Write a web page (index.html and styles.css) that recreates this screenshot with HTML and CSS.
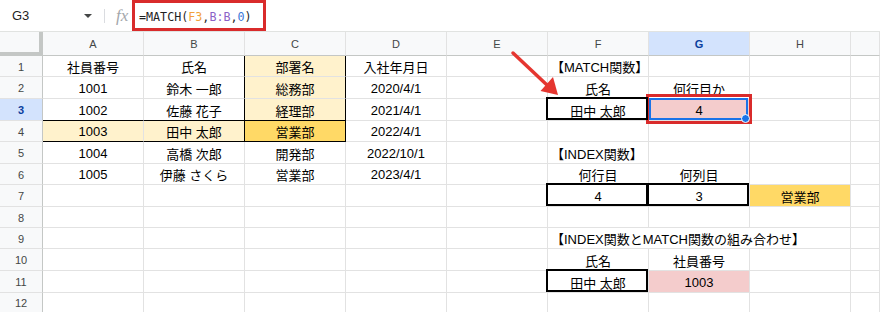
FILE: index.html
```html
<!DOCTYPE html>
<html lang="ja">

<head>
    <meta charset="utf-8">
    <meta name="viewport" content="width=device-width, initial-scale=1.0">
    <title>MATCH関数</title>
    <link rel="stylesheet" href="styles.css">
</head>

<body>
    <div class="page">
        <div class="toolbar">
            <div class="namebox"><span>G3</span><span class="caret"></span></div>
            <div class="sep"></div>
            <span class="fx">fx</span>
            <div class="formula">=MATCH(<span class="r1">F3</span>,<span class="r2">B:B</span>,<span class="r3">0</span>)</div>
        </div>

        <div class="sheet">
            <!-- header -->
            <div class="c corner"></div>
            <div class="c hd">A</div>
            <div class="c hd">B</div>
            <div class="c hd">C</div>
            <div class="c hd">D</div>
            <div class="c hd">E</div>
            <div class="c hd">F</div>
            <div class="c hd on">G</div>
            <div class="c hd">H</div>
            <div class="c hd"></div>

            <!-- 1 -->
            <div class="c rh">1</div>
            <div class="c">社員番号</div>
            <div class="c br">氏名</div>
            <div class="c y br">部署名</div>
            <div class="c">入社年月日</div>
            <div class="c"></div>
            <div class="c l">【MATCH関数】</div>
            <div class="c"></div>
            <div class="c"></div>
            <div class="c"></div>

            <!-- 2 -->
            <div class="c rh">2</div>
            <div class="c">1001</div>
            <div class="c br">鈴木 一郎</div>
            <div class="c y br">総務部</div>
            <div class="c">2020/4/1</div>
            <div class="c"></div>
            <div class="c">氏名</div>
            <div class="c">何行目か</div>
            <div class="c"></div>
            <div class="c"></div>

            <!-- 3 -->
            <div class="c rh on">3</div>
            <div class="c bb">1002</div>
            <div class="c br bb">佐藤 花子</div>
            <div class="c y br bb">経理部</div>
            <div class="c">2021/4/1</div>
            <div class="c"></div>
            <div class="c bx">田中 太郎</div>
            <div class="c pk sel">4</div>
            <div class="c"></div>
            <div class="c"></div>

            <!-- 4 -->
            <div class="c rh">4</div>
            <div class="c y bb">1003</div>
            <div class="c y br bb">田中 太郎</div>
            <div class="c yy br bb">営業部</div>
            <div class="c">2022/4/1</div>
            <div class="c"></div>
            <div class="c"></div>
            <div class="c"></div>
            <div class="c"></div>
            <div class="c"></div>

            <!-- 5 -->
            <div class="c rh">5</div>
            <div class="c">1004</div>
            <div class="c">高橋 次郎</div>
            <div class="c">開発部</div>
            <div class="c">2022/10/1</div>
            <div class="c"></div>
            <div class="c l">【INDEX関数】</div>
            <div class="c"></div>
            <div class="c"></div>
            <div class="c"></div>

            <!-- 6 -->
            <div class="c rh">6</div>
            <div class="c">1005</div>
            <div class="c">伊藤 さくら</div>
            <div class="c">営業部</div>
            <div class="c">2023/4/1</div>
            <div class="c"></div>
            <div class="c">何行目</div>
            <div class="c">何列目</div>
            <div class="c"></div>
            <div class="c"></div>

            <!-- 7 -->
            <div class="c rh">7</div>
            <div class="c"></div>
            <div class="c"></div>
            <div class="c"></div>
            <div class="c"></div>
            <div class="c"></div>
            <div class="c bx">4</div>
            <div class="c bx">3</div>
            <div class="c yy">営業部</div>
            <div class="c"></div>

            <!-- 8 -->
            <div class="c rh">8</div>
            <div class="c"></div>
            <div class="c"></div>
            <div class="c"></div>
            <div class="c"></div>
            <div class="c"></div>
            <div class="c"></div>
            <div class="c"></div>
            <div class="c"></div>
            <div class="c"></div>

            <!-- 9 -->
            <div class="c rh">9</div>
            <div class="c"></div>
            <div class="c"></div>
            <div class="c"></div>
            <div class="c"></div>
            <div class="c"></div>
            <div class="c l span3">【INDEX関数とMATCH関数の組み合わせ】</div>
            <div class="c"></div>

            <!-- 10 -->
            <div class="c rh">10</div>
            <div class="c"></div>
            <div class="c"></div>
            <div class="c"></div>
            <div class="c"></div>
            <div class="c"></div>
            <div class="c">氏名</div>
            <div class="c">社員番号</div>
            <div class="c"></div>
            <div class="c"></div>

            <!-- 11 -->
            <div class="c rh">11</div>
            <div class="c"></div>
            <div class="c"></div>
            <div class="c"></div>
            <div class="c"></div>
            <div class="c"></div>
            <div class="c bx">田中 太郎</div>
            <div class="c pk">1003</div>
            <div class="c"></div>
            <div class="c"></div>

            <!-- 12 -->
            <div class="c rh">12</div>
            <div class="c"></div>
            <div class="c"></div>
            <div class="c"></div>
            <div class="c"></div>
            <div class="c"></div>
            <div class="c"></div>
            <div class="c"></div>
            <div class="c"></div>
            <div class="c"></div>
        </div>

        <!-- annotations -->
        <div class="mark"></div>
        <svg class="arrow" width="60" height="52" viewBox="0 0 60 52">
            <line x1="8" y1="5" x2="42" y2="37" stroke="#e53630" stroke-width="3.5" stroke-linecap="round" />
            <polygon points="53,47 35.5,43 48,29" fill="#e53630" />
        </svg>
    </div>
</body>

</html>
```

FILE: styles.css
```css
* {
    box-sizing: border-box;
}

body {
    margin: 0;
    background: #fff;
    font-family: "Liberation Sans", "Noto Sans CJK JP", sans-serif;
    color: #000;
}

.page {
    position: relative;
    width: 880px;
    height: 312px;
    overflow: hidden;
}

/* formula bar */

.toolbar {
    display: flex;
    align-items: center;
    height: 32px;
    border-bottom: 1px solid #e1e3e1;
}

.namebox {
    width: 104px;
    display: flex;
    align-items: center;
    justify-content: space-between;
    padding: 0 12px 0 12px;
    font-size: 13px;
    color: #1f1f1f;
}

.caret {
    width: 0;
    height: 0;
    border-left: 4px solid transparent;
    border-right: 4px solid transparent;
    border-top: 4px solid #444746;
}

.sep {
    width: 1px;
    height: 14px;
    background: #dadce0;
}

.fx {
    width: 16px;
    margin-left: 11px;
    font-family: "Liberation Serif", serif;
    font-style: italic;
    font-size: 17px;
    color: #a4a7ab;
}

.formula {
    align-self: flex-start;
    width: 134px;
    height: 31px;
    border: 3px solid #d92b2b;
    padding: 2px 0 0 4px;
    display: flex;
    align-items: center;
    font-family: "DejaVu Sans Mono", monospace;
    font-size: 11.7px;
    color: #1f1f1f;
}

.r1 {
    color: #f2a13a;
}

.r2 {
    color: #8c61c6;
}

.r3 {
    color: #3c78d8;
}

/* grid */

.sheet {
    display: grid;
    grid-template-columns: 43px repeat(8, 101px) 29px;
    grid-template-rows: 24px 21px 22px 22px 21px 22px 21px 22px 21px 21px 22px 22px 20px;
}

.c {
    position: relative;
    display: flex;
    align-items: center;
    justify-content: center;
    padding-top: 1px;
    border-right: 1px solid #e2e2e2;
    border-bottom: 1px solid #e2e2e2;
    font-size: 13px;
    white-space: nowrap;
}

.hd {
    background: #f8f9fa;
    color: #444746;
    font-size: 11px;
    border-bottom-color: #c4c7c5;
}

.rh {
    background: #f8f9fa;
    color: #444746;
    font-size: 11px;
    border-right-color: #c4c7c5;
}

.corner {
    background: #f8f9fa;
    border-right: 4px solid #c4c7c5;
    border-bottom: 4px solid #c4c7c5;
}

.on {
    background: #d3e3fd;
    color: #0b3f9e;
    font-weight: bold;
}

.l {
    justify-content: flex-start;
    padding-left: 3px;
}

.span3 {
    grid-column: span 3;
}

.y {
    background: #fff2cc;
}

.yy {
    background: #ffd966;
}

.pk {
    background: #f4cccc;
}

.br {
    border-right-color: #000;
}

.bb {
    border-bottom-color: #000;
}

.bx::after {
    content: "";
    position: absolute;
    top: -2px;
    left: -2px;
    right: 0;
    bottom: 0;
    border: 2px solid #000;
    z-index: 1;
}

.sel::after {
    content: "";
    position: absolute;
    top: -1px;
    left: 0;
    right: 1px;
    bottom: 0;
    border: 2px solid #1a73e8;
    z-index: 1;
}

.sel::before {
    content: "";
    position: absolute;
    right: -1px;
    bottom: -3px;
    width: 7px;
    height: 7px;
    border: 1px solid #fff;
    border-radius: 50%;
    background: #1a73e8;
    z-index: 2;
}

/* annotations */

.mark {
    position: absolute;
    left: 646px;
    top: 94px;
    width: 106px;
    height: 30px;
    border: 3px solid #d92b2b;
}

.arrow {
    position: absolute;
    left: 505px;
    top: 48px;
}
```
